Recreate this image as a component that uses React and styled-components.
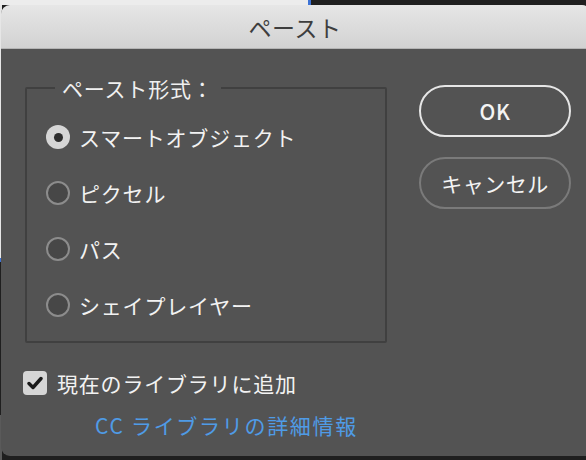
import styled, { createGlobalStyle } from "styled-components";
import { useState } from "react";

const GlobalStyle = createGlobalStyle`
  html, body {
    margin: 0;
    padding: 0;
    width: 586px;
    height: 460px;
    overflow: hidden;
  }
  body {
    background:
      linear-gradient(#ececec, #ececec) 0 0 / 308px 5px no-repeat,
      linear-gradient(#3d73d6, #3d73d6) 308px 0 / 3px 5px no-repeat,
      linear-gradient(#e6e6e6, #e6e6e6) 0 0 / 2px 258px no-repeat,
      linear-gradient(#3d73d6, #3d73d6) 0 258px / 2px 4px no-repeat,
      linear-gradient(#5a5a5a, #5a5a5a) 0 415px / 2px 45px no-repeat,
      #1f1f1f;
    font-family: "Noto Sans CJK JP", "Noto Sans", sans-serif;
  }
`;

const Dialog = styled.div`
  margin: 5px 0 0 1px;
  width: 590px;
  height: 451px;
  border-radius: 9px 9px 0 9px;
  overflow: hidden;
  display: flex;
  flex-direction: column;
  background: #535353;
`;

const TitleBar = styled.div`
  height: 43px;
  flex-shrink: 0;
  display: flex;
  align-items: center;
  justify-content: center;
  padding-right: 2px;
  background: linear-gradient(#e6e6e6, #d2d2d2);
  border-bottom: 1px solid #b4b4b4;
  color: #3e3e3e;
  font-size: 23px;
  letter-spacing: 0.5px;
`;

const Body = styled.div`
  flex: 1;
  display: flex;
  padding: 26px 0 0 24px;
`;

const LeftColumn = styled.div`
  width: 362px;
  display: flex;
  flex-direction: column;
`;

const GroupBox = styled.fieldset`
  margin: 0;
  padding: 24px 0 24px 19px;
  height: 268px;
  box-sizing: border-box;
  border: 2px solid #404040;
  border-radius: 2px;
  display: flex;
  flex-direction: column;
  gap: 32px;
`;

const Legend = styled.legend`
  margin-left: 9px;
  padding: 0 7px;
  color: #f0f0f0;
  font-size: 21px;
  line-height: 26px;
  letter-spacing: 0.8px;
`;

const RadioRow = styled.label`
  display: flex;
  align-items: center;
  gap: 9px;
  height: 24px;
  color: #f2f2f2;
  font-size: 21px;
  letter-spacing: 0.8px;
  cursor: default;
`;

const RadioCircle = styled.span`
  width: 24px;
  height: 24px;
  box-sizing: border-box;
  border-radius: 50%;
  flex-shrink: 0;
  display: flex;
  align-items: center;
  justify-content: center;
  background: ${(p) => (p.$on ? "#d6d6d6" : "#474747")};
  border: ${(p) => (p.$on ? "none" : "2px solid #8c8c8c")};

  &::after {
    content: "";
    display: ${(p) => (p.$on ? "block" : "none")};
    width: 9px;
    height: 9px;
    border-radius: 50%;
    background: #2e2e2e;
  }
`;

const CheckRow = styled.label`
  margin: 25px 0 0 -2px;
  display: flex;
  align-items: center;
  gap: 10px;
  color: #f2f2f2;
  font-size: 21px;
  letter-spacing: 0.8px;
`;

const CheckBox = styled.span`
  width: 24px;
  height: 24px;
  border-radius: 4px;
  background: #d6d6d6;
  display: flex;
  align-items: center;
  justify-content: center;
  flex-shrink: 0;
`;

const Link = styled.a`
  margin: 12px 0 0 70px;
  color: #4f9be6;
  font-size: 21px;
  letter-spacing: 1.7px;
  text-decoration: none;
`;

const RightColumn = styled.div`
  margin-left: 32px;
  padding-top: 10px;
  display: flex;
  flex-direction: column;
  gap: 20px;
`;

const Button = styled.button`
  width: 152px;
  height: 52px;
  border-radius: 26px;
  background: transparent;
  border: 2px solid ${(p) => (p.$primary ? "#e6e6e6" : "#7a7a7a")};
  color: #f4f4f4;
  font-family: "Noto Sans CJK JP", "Noto Sans", sans-serif;
  font-size: 21px;
  font-weight: ${(p) => (p.$primary ? 500 : 400)};
  letter-spacing: 0.5px;
  padding: 0;
  cursor: pointer;
`;

const formats = ["スマートオブジェクト", "ピクセル", "パス", "シェイプレイヤー"];

export default function App() {
  const [format, setFormat] = useState(0);

  return (
    <>
      <GlobalStyle />
      <Dialog>
        <TitleBar>ペースト</TitleBar>
        <Body>
          <LeftColumn>
            <GroupBox>
              <Legend>ペースト形式：</Legend>
              {formats.map((f, i) => (
                <RadioRow key={f} onClick={() => setFormat(i)}>
                  <RadioCircle $on={format === i} />
                  {f}
                </RadioRow>
              ))}
            </GroupBox>
            <CheckRow>
              <CheckBox>
                <svg width="16" height="14" viewBox="0 0 16 14">
                  <path
                    d="M2 7.5 L6 11.5 L14 2.5"
                    fill="none"
                    stroke="#1a1a1a"
                    strokeWidth="3.4"
                    strokeLinecap="round"
                    strokeLinejoin="round"
                  />
                </svg>
              </CheckBox>
              現在のライブラリに追加
            </CheckRow>
            <Link href="#">CC ライブラリの詳細情報</Link>
          </LeftColumn>
          <RightColumn>
            <Button $primary>OK</Button>
            <Button>キャンセル</Button>
          </RightColumn>
        </Body>
      </Dialog>
    </>
  );
}
